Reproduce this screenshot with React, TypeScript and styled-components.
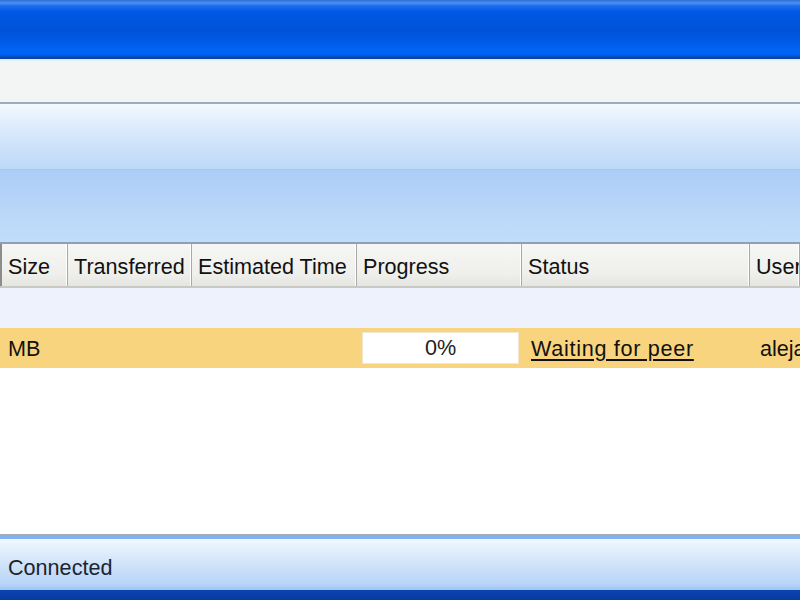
import styled, { createGlobalStyle } from "styled-components";

const GlobalStyle = createGlobalStyle`
    html, body {
        margin: 0;
        padding: 0;
        overflow: hidden;
    }
    body {
        font-family: "Liberation Sans", Arial, sans-serif;
        color: #1a1a1a;
    }
`;

const columns = "68px 124px 165px 165px 228px 1fr";

type Transfer = {
    size: string;
    transferred: string;
    estimated: string;
    progress: number;
    status: string;
    user: string;
};

const transfers: Transfer[] = [
    { size: "MB", transferred: "", estimated: "", progress: 0, status: "Waiting for peer", user: "alejandro" },
];

export default function App() {
    return (
        <>
            <GlobalStyle />
            <Window>
                <TitleBar />
                <MenuBar />
                <ToolPanel>
                    <PanelTop />
                    <PanelBottom />
                </ToolPanel>
                <ListView>
                    <HeaderRow>
                        <HeaderCell $first>Size</HeaderCell>
                        <HeaderCell>Transferred</HeaderCell>
                        <HeaderCell>Estimated Time</HeaderCell>
                        <HeaderCell>Progress</HeaderCell>
                        <HeaderCell>Status</HeaderCell>
                        <HeaderCell>User</HeaderCell>
                    </HeaderRow>
                    <GroupRow />
                    {transfers.map((t, i) => (
                        <DataRow key={i}>
                            <Cell>{t.size}</Cell>
                            <Cell>{t.transferred}</Cell>
                            <Cell>{t.estimated}</Cell>
                            <ProgressCell>
                                <ProgressBox>{t.progress}%</ProgressBox>
                            </ProgressCell>
                            <StatusCell>{t.status}</StatusCell>
                            <UserCell>{t.user}</UserCell>
                        </DataRow>
                    ))}
                </ListView>
                <StatusBar>
                    <StatusText>Connected</StatusText>
                </StatusBar>
                <BottomFrame />
            </Window>
        </>
    );
}

const Window = styled.div`
    width: 800px;
    height: 600px;
    display: flex;
    flex-direction: column;
    background: #fff;
    overflow: hidden;
`;

const TitleBar = styled.div`
    height: 59px;
    flex: none;
    background: linear-gradient(
        to bottom,
        #2f6fd8 0px,
        #4a92f2 3px,
        #1a6cf0 6px,
        #0058e6 12px,
        #0052d8 30px,
        #005ce8 42px,
        #0066f8 52px,
        #0060ec 55px,
        #0a48b8 57px,
        #0a3f9c 59px
    );
`;

const MenuBar = styled.div`
    height: 45px;
    flex: none;
    box-sizing: border-box;
    background: #f3f5f4;
    border-top: 2px solid #dff2fb;
    border-bottom: 2px solid #96adc2;
`;

const ToolPanel = styled.div`
    height: 140px;
    flex: none;
    display: flex;
    flex-direction: column;
    border-bottom: 2px solid #8fa0b4;
    box-sizing: border-box;
`;

const PanelTop = styled.div`
    flex: none;
    height: 65px;
    background: linear-gradient(to bottom, #f3f9ff 0%, #e6f1fd 20%, #d2e5fa 55%, #bdd9f8 100%);
    border-bottom: 1px solid #a9c7ee;
`;

const PanelBottom = styled.div`
    flex: 1;
    background: linear-gradient(to bottom, #abcdf7 0%, #b3d2f8 30%, #bdd9f9 70%, #c2ddfa 100%);
`;

const ListView = styled.div`
    flex: 1;
    display: flex;
    flex-direction: column;
    background: #fff;
    border-bottom: 2px solid #a3abb4;
`;

const HeaderRow = styled.div`
    display: grid;
    grid-template-columns: ${columns};
    height: 44px;
    box-sizing: border-box;
    background: linear-gradient(to bottom, #f6f6f4 0%, #efefec 70%, #e5e5e1 100%);
    border-bottom: 2px solid #c9c9c4;
`;

const HeaderCell = styled.div<{ $first?: boolean }>`
    display: flex;
    align-items: center;
    padding: 4px 0 0 ${(p) => (p.$first ? "6px" : "6px")};
    font-size: 21.6px;
    color: #111;
    white-space: nowrap;
    overflow: hidden;
    border-left: ${(p) => (p.$first ? "2px solid #8c8c8c" : "none")};
    border-right: 1px solid #a9a9a6;
    box-shadow: inset -1px 0 0 #ffffff;
`;

const GroupRow = styled.div`
    height: 40px;
    background: #eef2fc;
`;

const DataRow = styled.div`
    display: grid;
    grid-template-columns: ${columns};
    height: 40px;
    background: #f9d47e;
    font-size: 21.6px;
    color: #111;
`;

const Cell = styled.div`
    display: flex;
    align-items: center;
    padding: 1px 0 0 8px;
    white-space: nowrap;
    overflow: hidden;
`;

const ProgressCell = styled.div`
    display: flex;
    align-items: center;
    padding: 0 3px 0 5px;
`;

const ProgressBox = styled.div`
    flex: 1;
    height: 30px;
    display: flex;
    align-items: center;
    justify-content: center;
    background: #fff;
    border: 1px solid #efe6cf;
    color: #222;
`;

const StatusCell = styled(Cell)`
    padding-left: 9px;
    letter-spacing: 0.7px;
    text-decoration: underline;
    text-underline-offset: 3px;
`;

const UserCell = styled(Cell)`
    padding-left: 10px;
`;

const StatusBar = styled.div`
    height: 54px;
    flex: none;
    display: flex;
    align-items: center;
    box-sizing: border-box;
    border-top: 3px solid #7fb2ee;
    background: linear-gradient(to bottom, #f1f8ff 0%, #dcebfc 30%, #c6ddf9 65%, #b6d3f7 90%, #9fc2f0 100%);
    padding: 6px 8px 0;
`;

const StatusText = styled.span`
    font-size: 21.6px;
    color: #1c2430;
`;

const BottomFrame = styled.div`
    height: 10px;
    flex: none;
    background: linear-gradient(to bottom, #0a44b4, #0a3a9c);
`;
